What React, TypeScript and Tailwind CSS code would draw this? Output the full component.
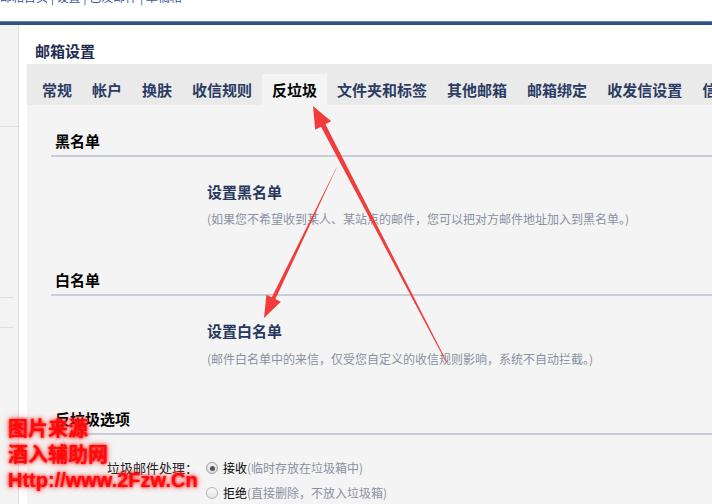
export default function App() {
  const tabs = ['常规', '帐户', '换肤', '收信规则', '反垃圾', '文件夹和标签', '其他邮箱', '邮箱绑定', '收发信设置', '信纸']

  return (
    <div className="relative h-[504px] w-[712px] overflow-hidden bg-white font-['Noto_Sans_CJK_SC','Microsoft_YaHei',sans-serif]">
      {/* Top links, cut off by the window */}
      <div className="h-[21px] overflow-hidden bg-white">
        <div className="-mt-[10px] whitespace-nowrap text-[12px] leading-[13px] text-[#3b5998]">
          邮箱首页 | 设置 | 已发邮件 | 草稿箱
        </div>
      </div>
      <div className="h-[4px] border-t border-[#6a86aa] bg-[#2f5384]" />

      <div className="flex h-[479px]">
        {/* Left sidebar */}
        <div className="w-[19px] shrink-0 border-r border-[#dedede] bg-[#f3f3f3]">
          <div className="h-[102px] border-b border-[#dddddd]" />
          <div className="h-[171px] w-[13px] border-b border-[#dddddd]" />
          <div className="h-[30px] w-[13px] border-b border-[#dddddd]" />
        </div>

        {/* Main */}
        <div className="flex min-w-0 flex-1 flex-col bg-white pl-[8px]">
          <div className="h-[39px] pl-[8px] pt-[18px] text-[15px] font-bold leading-[15px] text-[#1f2c50]">
            邮箱设置
          </div>

          {/* Tabs */}
          <div className="flex h-[41px] items-end whitespace-nowrap bg-[#eaeaea] pl-[5px]">
            {tabs.map((t) =>
              t === '反垃圾' ? (
                <div key={t} className="h-[31px] shrink-0 bg-[#f4f4f4] px-[10px] text-[15px] font-bold leading-[31px] text-black">
                  {t}
                </div>
              ) : (
                <div key={t} className="h-[31px] shrink-0 px-[10px] text-[15px] font-bold leading-[31px] text-[#2b3c63]">
                  {t}
                </div>
              )
            )}
          </div>

          {/* Content */}
          <div className="flex-1 bg-[#f4f4f4] pl-[24px]">
            <div className="border-b-2 border-[#c9cdd9] pb-[4px] pl-[4px] pt-[26px] text-[15px] font-bold leading-[20px] text-black">
              黑名单
            </div>
            <div className="pl-[156px]">
              <div className="mt-[25px] text-[15px] font-bold leading-[20px] text-[#27385e]">设置黑名单</div>
              <div className="mt-[9px] whitespace-nowrap text-[12px] leading-[16px] text-[#8a90a2]">
                (如果您不希望收到某人、某站点的邮件，您可以把对方邮件地址加入到黑名单。)
              </div>
            </div>

            <div className="mt-[43px] border-b-2 border-[#c9cdd9] pb-[4px] pl-[4px] text-[15px] font-bold leading-[20px] text-black">
              白名单
            </div>
            <div className="pl-[156px]">
              <div className="mt-[25px] text-[15px] font-bold leading-[20px] text-[#27385e]">设置白名单</div>
              <div className="mt-[10px] whitespace-nowrap text-[12px] leading-[16px] text-[#8a90a2]">
                (邮件白名单中的来信，仅受您自定义的收信规则影响，系统不自动拦截。)
              </div>
            </div>

            <div className="mt-[42px] border-b-2 border-[#c9cdd9] pb-[4px] pl-[4px] text-[15px] font-bold leading-[20px] text-black">
              反垃圾选项
            </div>
            <div className="mt-[23px] flex flex-col gap-[5px] pl-[56px]">
              <div className="flex h-[20px] items-center whitespace-nowrap">
                <div className="w-[99px] text-[13px] leading-[20px] text-[#222]">垃圾邮件处理：</div>
                <span className="flex h-[12px] w-[12px] items-center justify-center rounded-full border border-[#9c9c9c] bg-gradient-to-b from-[#f0f0f0] to-[#dcdcdc]">
                  <span className="h-[5px] w-[5px] rounded-full bg-[#555]" />
                </span>
                <span className="ml-[5px] text-[12px] leading-[20px] text-black">接收</span>
                <span className="text-[12px] leading-[20px] text-[#8a90a2]">(临时存放在垃圾箱中)</span>
              </div>
              <div className="flex h-[20px] items-center whitespace-nowrap">
                <div className="w-[99px]" />
                <span className="h-[12px] w-[12px] rounded-full border border-[#b4b4b4] bg-gradient-to-b from-[#fafafa] to-[#e4e4e4]" />
                <span className="ml-[5px] text-[12px] leading-[20px] text-black">拒绝</span>
                <span className="text-[12px] leading-[20px] text-[#8a90a2]">(直接删除，不放入垃圾箱)</span>
              </div>
            </div>
          </div>
        </div>
      </div>

      {/* Red annotation arrows */}
      <svg className="pointer-events-none absolute left-0 top-0" width="712" height="504" viewBox="0 0 712 504">
        <polygon fill="#f23b3b" points="447,362 446,362 321,126.7 315.2,129.7 313,106 331.2,121.3 325.4,124.3" />
        <polygon fill="#f23b3b" points="337,167 336.5,167.5 271.8,297.3 266.4,294.7 264,318 280.8,301.7 275.4,299.1" />
      </svg>

      {/* Watermark */}
      <div className="pointer-events-none absolute left-[8px] top-[415px] font-['Liberation_Sans','Noto_Sans_CJK_SC',sans-serif] text-[20px] leading-[26px] text-[#ff0a0a] [text-shadow:0_0_3px_#ff0000,0_0_6px_#ff4040]">
        <div className="font-['Noto_Sans_CJK_SC',sans-serif] font-bold">图片来源</div>
        <div className="font-['Noto_Sans_CJK_SC',sans-serif] font-bold">酒入辅助网</div>
        <div className="whitespace-nowrap font-bold">Http://www.2Fzw.Cn</div>
      </div>
    </div>
  )
}
